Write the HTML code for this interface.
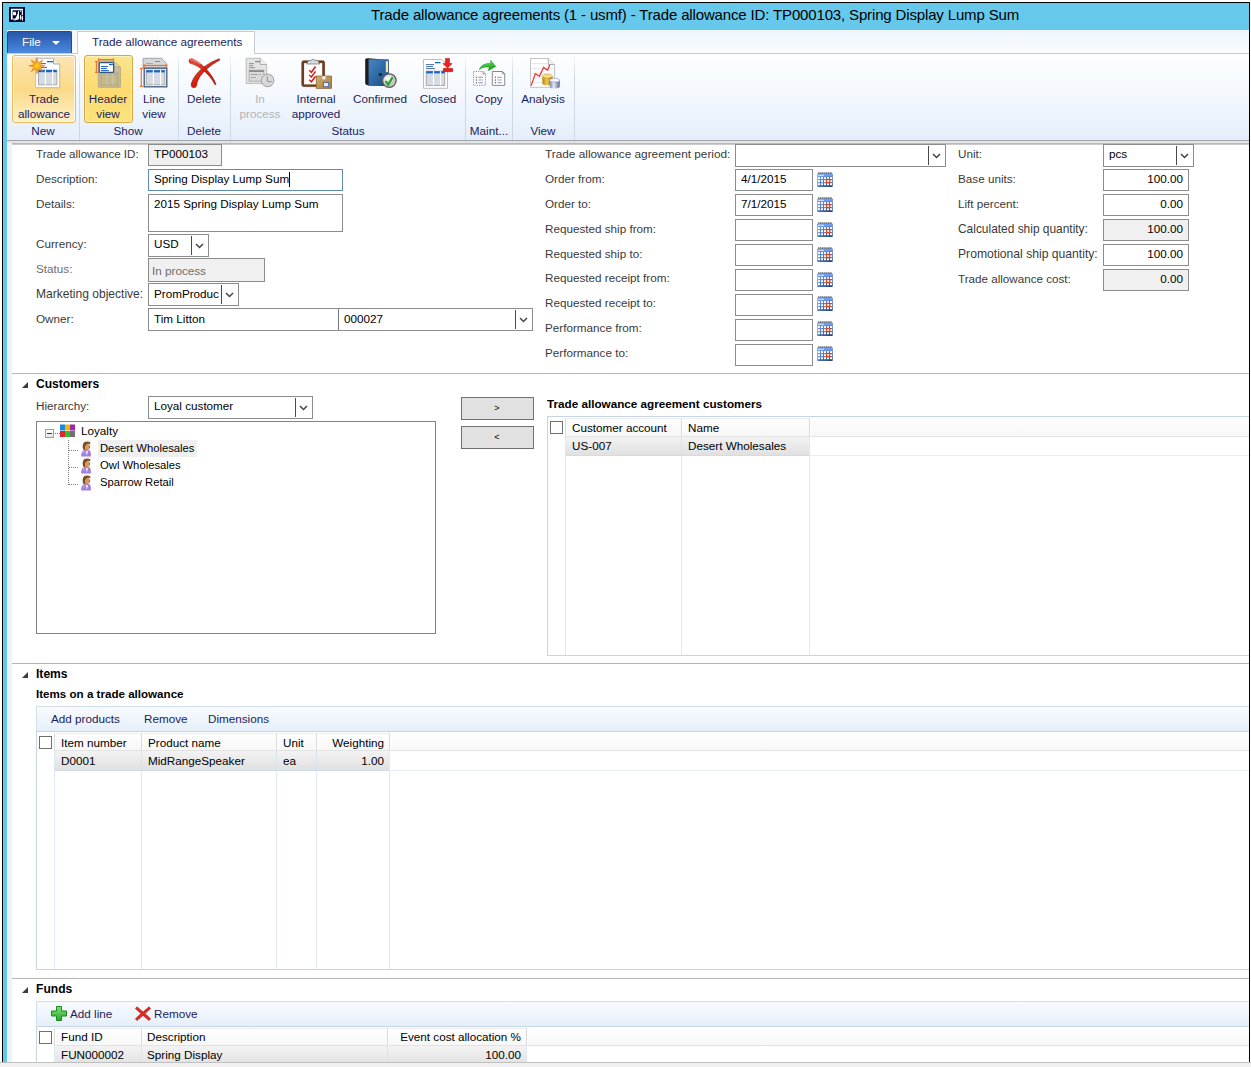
<!DOCTYPE html>
<html><head><meta charset="utf-8">
<style>
*{box-sizing:border-box}
html,body{margin:0;padding:0;width:1251px;height:1067px;overflow:hidden;background:#fff;position:relative;font-family:"Liberation Sans",sans-serif;font-size:11.7px;color:#000}
.a{position:absolute}
.t{position:absolute;white-space:nowrap;line-height:14px}
.lb{position:absolute;white-space:nowrap;line-height:14px;color:#3a3a3a}
</style></head><body>
<div class="a" style="left:2px;top:2px;width:1248px;height:1060px;border:1px solid #000;border-bottom:none;background:#fff"></div>
<div class="a" style="left:3px;top:3px;width:1246px;height:27px;background:#66c8ea"></div>
<div class="a" style="left:3px;top:30px;width:4px;height:1032px;background:#66c8ea"></div>
<div class="a" style="left:7px;top:141px;width:5px;height:921px;background:#eaf4fd"></div>
<div class="a" style="left:0px;top:1062px;width:1251px;height:1px;background:#c0c0c0"></div>
<div class="a" style="left:0px;top:1063px;width:1251px;height:4px;background:#f0f0f0"></div>
<svg class="a" style="left:9px;top:7px" width="16" height="15" viewBox="0 0 16 15"><rect width="16" height="15" fill="#000838"/><path d="M1.9,1.8 H13.9 V8.2 H12.8 V3.2 H3.6 V11.4 H5.8 V12.6 H1.9 Z" fill="#fff"/><rect x="4.1" y="4.8" width="2.8" height="3.4" fill="#fff"/><path d="M4.6,13.8 C7,11 8.6,8 9.3,3.8 L10,4 V12.3 C8.2,12.9 6.4,13.5 4.6,13.8 Z" fill="#fff"/><ellipse cx="11.6" cy="10.3" rx="0.75" ry="2.6" fill="#fff"/><ellipse cx="13.4" cy="11.3" rx="0.65" ry="2.5" fill="#fff"/><rect x="11.2" y="3.6" width="0.9" height="1.3" fill="#fff"/></svg>
<div class="t" style="left:371px;top:6px;font-size:15px;line-height:17px;letter-spacing:-0.15px;color:#000">Trade allowance agreements (1 - usmf) - Trade allowance ID: TP000103, Spring Display Lump Sum</div>
<div class="a" style="left:7px;top:30px;width:1242px;height:23px;background:linear-gradient(#eef5fd,#fbfdfe)"></div>
<div class="a" style="left:7px;top:53px;width:1242px;height:1px;background:#c9ccd2"></div>
<div class="a" style="left:7px;top:31px;width:65px;height:22px;background:linear-gradient(#2857a8,#3a70c6 50%,#4a8ade);border:1px solid #1f4a9a;border-bottom:none;border-radius:2px 2px 0 0"></div>
<div class="t" style="left:22px;top:35px;color:#fff;">File</div>
<div class="a" style="left:52px;top:41px;width:0;height:0;border-left:4px solid transparent;border-right:4px solid transparent;border-top:4px solid #fff"></div>
<div class="a" style="left:77px;top:31px;width:178px;height:23px;background:#fff;border:1px solid #c9ccd2;border-bottom:none"></div>
<div class="t" style="left:92px;top:35px;color:#1c1c5c;">Trade allowance agreements</div>
<div class="a" style="left:7px;top:54px;width:1242px;height:86px;background:linear-gradient(#fdfeff,#f5f9fe 40%,#e4eefa)"></div>
<div class="a" style="left:7px;top:140px;width:1242px;height:1px;background:#a0a5ad"></div>
<div class="a" style="left:7px;top:141px;width:1242px;height:2px;background:#e4e4e4"></div>
<div class="a" style="left:12px;top:143px;width:1237px;height:2px;background:linear-gradient(#b0b0b0,#d4d4d4)"></div>
<div class="a" style="left:12px;top:55px;width:64px;height:68px;border:1px solid #efb75e;border-radius:3px;box-shadow:inset 0 0 0 1px rgba(255,255,255,0.75);background:linear-gradient(#fde4b4,#fbd986 50%,#fdf1c8)"></div>
<div class="a" style="left:84px;top:55px;width:49px;height:68px;border:1px solid #d8a646;border-radius:3px;box-shadow:inset 0 0 0 1px rgba(255,250,220,0.5);background:linear-gradient(#fde58e,#fcdb70 50%,#fde27e)"></div>
<div class="a" style="left:79px;top:56px;width:1px;height:84px;background:linear-gradient(#f4f7fa,#cfd8e2 25%,#cfd8e2)"></div>
<div class="a" style="left:178px;top:56px;width:1px;height:84px;background:linear-gradient(#f4f7fa,#cfd8e2 25%,#cfd8e2)"></div>
<div class="a" style="left:230px;top:56px;width:1px;height:84px;background:linear-gradient(#f4f7fa,#cfd8e2 25%,#cfd8e2)"></div>
<div class="a" style="left:465px;top:56px;width:1px;height:84px;background:linear-gradient(#f4f7fa,#cfd8e2 25%,#cfd8e2)"></div>
<div class="a" style="left:512px;top:56px;width:1px;height:84px;background:linear-gradient(#f4f7fa,#cfd8e2 25%,#cfd8e2)"></div>
<div class="a" style="left:574px;top:56px;width:1px;height:84px;background:linear-gradient(#f4f7fa,#cfd8e2 25%,#cfd8e2)"></div>
<div class="t" style="left:-1.0px;top:92px;width:90px;text-align:center;color:#1c1c5c;">Trade</div>
<div class="t" style="left:-1.0px;top:107px;width:90px;text-align:center;color:#1c1c5c;">allowance</div>
<div class="t" style="left:63.0px;top:92px;width:90px;text-align:center;color:#1c1c5c;">Header</div>
<div class="t" style="left:63.0px;top:107px;width:90px;text-align:center;color:#1c1c5c;">view</div>
<div class="t" style="left:109.0px;top:92px;width:90px;text-align:center;color:#1c1c5c;">Line</div>
<div class="t" style="left:109.0px;top:107px;width:90px;text-align:center;color:#1c1c5c;">view</div>
<div class="t" style="left:159.0px;top:92px;width:90px;text-align:center;color:#1c1c5c;">Delete</div>
<div class="t" style="left:215.0px;top:92px;width:90px;text-align:center;color:#b4b4b4;">In</div>
<div class="t" style="left:215.0px;top:107px;width:90px;text-align:center;color:#b4b4b4;">process</div>
<div class="t" style="left:271.0px;top:92px;width:90px;text-align:center;color:#1c1c5c;">Internal</div>
<div class="t" style="left:271.0px;top:107px;width:90px;text-align:center;color:#1c1c5c;">approved</div>
<div class="t" style="left:335.0px;top:92px;width:90px;text-align:center;color:#1c1c5c;">Confirmed</div>
<div class="t" style="left:393.0px;top:92px;width:90px;text-align:center;color:#1c1c5c;">Closed</div>
<div class="t" style="left:444.0px;top:92px;width:90px;text-align:center;color:#1c1c5c;">Copy</div>
<div class="t" style="left:498.0px;top:92px;width:90px;text-align:center;color:#1c1c5c;">Analysis</div>
<div class="t" style="left:-2.0px;top:124px;width:90px;text-align:center;color:#1c1c5c;">New</div>
<div class="t" style="left:83.0px;top:124px;width:90px;text-align:center;color:#1c1c5c;">Show</div>
<div class="t" style="left:159.0px;top:124px;width:90px;text-align:center;color:#1c1c5c;">Delete</div>
<div class="t" style="left:303.0px;top:124px;width:90px;text-align:center;color:#1c1c5c;">Status</div>
<div class="t" style="left:444.0px;top:124px;width:90px;text-align:center;color:#1c1c5c;">Maint...</div>
<div class="t" style="left:498.0px;top:124px;width:90px;text-align:center;color:#1c1c5c;">View</div>
<svg class="a" style="left:24px;top:54px" width="40" height="38" viewBox="0 0 40 38"><defs><radialGradient id="sg"><stop offset="0" stop-color="#ffd80a"/><stop offset="0.45" stop-color="#f9a81a"/><stop offset="1" stop-color="#ec8210"/></radialGradient><linearGradient id="gold" x1="0" x2="1"><stop offset="0" stop-color="#c08a20"/><stop offset="0.45" stop-color="#f3c64a"/><stop offset="1" stop-color="#a06a10"/></linearGradient><linearGradient id="silv" x1="0" x2="1"><stop offset="0" stop-color="#8890b0"/><stop offset="0.4" stop-color="#e8eaf4"/><stop offset="1" stop-color="#6a7298"/></linearGradient><linearGradient id="book" x1="0" x2="1" y1="0" y2="1"><stop offset="0" stop-color="#5c9ad6"/><stop offset="1" stop-color="#1f5a98"/></linearGradient><radialGradient id="chk" cx="0.4" cy="0.35"><stop offset="0" stop-color="#ffffff"/><stop offset="1" stop-color="#c8c8c8"/></radialGradient><linearGradient id="box" x1="0" x2="1" y1="0" y2="1"><stop offset="0" stop-color="#d6b070"/><stop offset="1" stop-color="#a57a38"/></linearGradient><linearGradient id="grn" x1="0" x2="0" y1="0" y2="1"><stop offset="0" stop-color="#8ef27a"/><stop offset="1" stop-color="#1ea61e"/></linearGradient></defs><path d="M12.5,5.5 H30.5 L36.5,11 V34.5 H12.5 Z" fill="#b9a77a" opacity="0.35"/><path d="M11.5,4.5 H29.5 L35.5,10 V33.5 H11.5 Z" fill="#fff" stroke="#c4c4c4"/><path d="M29.5,4.5 V10 H35.5" fill="#eee" stroke="#a9a9a9"/><rect x="23" y="7" width="6" height="1.3" fill="#1a66c8"/><rect x="17" y="9" width="5" height="1.1" fill="#3a7ad0"/><rect x="17" y="13" width="6" height="1.1" fill="#3a7ad0"/><rect x="14.5" y="16" width="18.299999999999997" height="14.8" fill="#d5dae3" stroke="#a9a9a9" stroke-width="1"/><rect x="14.5" y="16" width="18.299999999999997" height="2.2" fill="#1766c6"/><rect x="20.799999999999997" y="16" width="1.2" height="14.8" fill="#fff"/><rect x="28.0" y="16" width="1.2" height="14.8" fill="#fff"/><polygon points="13.00,3.60 14.22,8.84 18.80,6.00 15.96,10.58 21.20,11.80 15.96,13.02 18.80,17.60 14.22,14.76 13.00,20.00 11.78,14.76 7.20,17.60 10.04,13.02 4.80,11.80 10.04,10.58 7.20,6.00 11.78,8.84" fill="url(#sg)" stroke="#d87410" stroke-width="0.5"/></svg>
<svg class="a" style="left:90px;top:54px" width="40" height="38" viewBox="0 0 40 38"><path d="M8.3,7 H24 L30.3,13 V33.2 H8.3 Z" fill="#c8bd98" stroke="#b3a884"/><path d="M24,7 V13 H30.3" fill="#d8cfae" stroke="#b3a884"/><rect x="11" y="19" width="17" height="12" fill="#c4b88e" stroke="#b0a47c"/><rect x="11" y="19" width="17" height="1.6" fill="#a9aea0"/><rect x="16.6" y="19" width="0.8" height="12" fill="#d2c8a2"/><rect x="22.4" y="19" width="0.8" height="12" fill="#d2c8a2"/><rect x="9.2" y="8.6" width="14.4" height="9.8" rx="1" fill="#fff" stroke="#34557e" stroke-width="1.3"/><rect x="19" y="10" width="3.8" height="1.2" fill="#1a66c8"/><rect x="11" y="12" width="6.8" height="1.1" fill="#2a6ac4"/><rect x="11" y="14" width="5.8" height="1.1" fill="#2a6ac4"/><rect x="11" y="16" width="7.8" height="1.1" fill="#2a6ac4"/><path d="M8.6,5.7 H23.4 M8.6,4.2 V7.4 M23.4,4.2 V7.4 M6.4,7.6 V18.4 M5,7.6 H8 M5,18.4 H8" stroke="#ee7530" stroke-width="1.2" fill="none"/></svg>
<svg class="a" style="left:136px;top:54px" width="40" height="38" viewBox="0 0 40 38"><path d="M7.1,4.3 H25.5 L30.6,9.5 V14 H7.1 Z" fill="#d4d8dc" stroke="#a2a6aa"/><rect x="19" y="7" width="5" height="1" fill="#6a8ec0"/><rect x="10" y="9" width="7" height="1" fill="#9aaac0"/><path d="M8,11.5 H30.5" stroke="#ee7530" stroke-width="1.3"/><circle cx="8.2" cy="11.5" r="1.3" fill="#ee7530"/><circle cx="30.3" cy="11.5" r="1.3" fill="#ee7530"/><path d="M5.3,14.3 V32.3 M3.9,14.3 H6.9 M3.9,32.3 H6.9" stroke="#ee7530" stroke-width="1.2" fill="none"/><rect x="8.2" y="14.2" width="22.6" height="18.6" fill="#fff" stroke="#40597a" stroke-width="1.3"/><rect x="10.2" y="16.2" width="18.6" height="14.600000000000001" fill="#d5dae3" stroke="#a9a9a9" stroke-width="1"/><rect x="10.2" y="16.2" width="18.6" height="2.2" fill="#1766c6"/><rect x="16.799999999999997" y="16.2" width="1.2" height="14.600000000000001" fill="#fff"/><rect x="24.0" y="16.2" width="1.2" height="14.600000000000001" fill="#fff"/></svg>
<svg class="a" style="left:184px;top:54px" width="40" height="38" viewBox="0 0 40 38"><defs><linearGradient id="xg4" x1="0" y1="0" x2="1" y2="1"><stop offset="0" stop-color="#f06050"/><stop offset="0.5" stop-color="#d8200e"/><stop offset="1" stop-color="#c01a0a"/></linearGradient></defs><path d="M35.28,4.67 L34.01,5.14 L32.69,5.67 L31.34,6.25 L29.96,6.89 L28.56,7.59 L27.15,8.34 L25.72,9.14 L24.30,9.99 L22.88,10.90 L21.48,11.85 L20.09,12.86 L18.73,13.92 L17.40,15.02 L16.11,16.18 L14.87,17.39 L13.68,18.65 L12.55,19.96 L11.49,21.33 L10.51,22.75 L9.61,24.22 L8.80,25.76 L8.10,27.35 L7.51,29.00 L7.07,30.59 L12.53,31.81 L12.76,30.38 L13.08,29.07 L13.49,27.76 L14.01,26.45 L14.62,25.15 L15.33,23.87 L16.12,22.60 L16.98,21.35 L17.93,20.12 L18.93,18.92 L20.00,17.75 L21.12,16.61 L22.28,15.50 L23.48,14.43 L24.71,13.40 L25.97,12.41 L27.23,11.46 L28.51,10.55 L29.78,9.69 L31.05,8.88 L32.31,8.12 L33.54,7.40 L34.75,6.74 L35.92,6.13 Z" fill="url(#xg4)" stroke="#6a1208" stroke-width="0.45"/><circle cx="9.8" cy="31.2" r="2.75" fill="#d41e10"/><path d="M6.24,9.38 L7.10,9.57 L7.97,9.82 L8.89,10.13 L9.87,10.52 L10.90,10.98 L11.96,11.50 L13.05,12.10 L14.17,12.75 L15.30,13.47 L16.45,14.25 L17.61,15.09 L18.76,15.99 L19.92,16.94 L21.06,17.95 L22.19,19.02 L23.31,20.13 L24.39,21.30 L25.45,22.51 L26.47,23.77 L27.46,25.08 L28.40,26.44 L29.29,27.84 L30.13,29.28 L30.91,30.77 L32.09,30.23 L31.43,28.63 L30.70,27.06 L29.91,25.53 L29.06,24.03 L28.17,22.58 L27.22,21.16 L26.23,19.79 L25.21,18.46 L24.16,17.18 L23.08,15.95 L21.98,14.77 L20.86,13.64 L19.73,12.56 L18.59,11.53 L17.45,10.57 L16.31,9.66 L15.18,8.80 L14.06,8.01 L12.95,7.28 L11.86,6.61 L10.78,6.01 L9.73,5.47 L8.70,5.00 L7.76,4.62 Z" fill="url(#xg4)" stroke="#6a1208" stroke-width="0.45"/><circle cx="7" cy="7" r="2.45" fill="#e43a2a"/><path d="M6.5,6 C9.5,5.6 13,7.5 16,9.6" stroke="#f8a090" stroke-width="1.3" fill="none" opacity="0.75"/></svg>
<svg class="a" style="left:240px;top:54px" width="40" height="38" viewBox="0 0 40 38"><path d="M6.2,4.3 H20.3 L26.7,10.5 V29.5 H6.2 Z" fill="#e3e3e3" stroke="#bcbcbc"/><path d="M20.3,4.3 V10.5 H26.7" fill="#f0f0f0" stroke="#b0b0b0"/><rect x="15" y="7" width="5" height="1.2" fill="#8a8a8a"/><rect x="9" y="9" width="5" height="1.1" fill="#9a9a9a"/><rect x="9" y="11" width="4" height="1.1" fill="#9a9a9a"/><rect x="9" y="13" width="6" height="1.1" fill="#9a9a9a"/><rect x="9.2" y="16.2" width="14.6" height="11" fill="#dadada" stroke="#b0b0b0"/><rect x="9.2" y="16.2" width="14.6" height="1.8" fill="#8a8a8a"/><rect x="11" y="20" width="7" height="1" fill="#a0a0a0"/><rect x="19" y="20" width="2" height="1" fill="#a0a0a0"/><rect x="11" y="23" width="5" height="1" fill="#a8a8a8"/><circle cx="27.6" cy="26.4" r="6.3" fill="#d9d9d9" stroke="#a0a0a0" stroke-width="1"/><path d="M27.4,22.3 V27.6 H31.6" stroke="#909090" stroke-width="1" fill="none"/></svg>
<svg class="a" style="left:296px;top:54px" width="40" height="38" viewBox="0 0 40 38"><defs><radialGradient id="b6sg"><stop offset="0" stop-color="#ffd80a"/><stop offset="0.45" stop-color="#f9a81a"/><stop offset="1" stop-color="#ec8210"/></radialGradient><linearGradient id="b6gold" x1="0" x2="1"><stop offset="0" stop-color="#c08a20"/><stop offset="0.45" stop-color="#f3c64a"/><stop offset="1" stop-color="#a06a10"/></linearGradient><linearGradient id="b6silv" x1="0" x2="1"><stop offset="0" stop-color="#8890b0"/><stop offset="0.4" stop-color="#e8eaf4"/><stop offset="1" stop-color="#6a7298"/></linearGradient><linearGradient id="b6book" x1="0" x2="1" y1="0" y2="1"><stop offset="0" stop-color="#5c9ad6"/><stop offset="1" stop-color="#1f5a98"/></linearGradient><radialGradient id="b6chk" cx="0.4" cy="0.35"><stop offset="0" stop-color="#ffffff"/><stop offset="1" stop-color="#c8c8c8"/></radialGradient><linearGradient id="b6box" x1="0" x2="1" y1="0" y2="1"><stop offset="0" stop-color="#d6b070"/><stop offset="1" stop-color="#a57a38"/></linearGradient><linearGradient id="b6grn" x1="0" x2="0" y1="0" y2="1"><stop offset="0" stop-color="#8ef27a"/><stop offset="1" stop-color="#1ea61e"/></linearGradient></defs><rect x="5.8" y="6.8" width="22.8" height="25.8" rx="1.8" fill="#6e401c" stroke="#4a2a10" stroke-width="0.6"/><rect x="8.1" y="9.1" width="18.1" height="21.3" fill="#fff"/><path d="M10.5,10 L12.5,6.5 H14.5 Q17.2,3.8 19.8,6.5 H21.8 L23.8,10 Z" fill="#d6d9de" stroke="#6d7075" stroke-width="0.7"/><path d="M13.2,16.3 L15.4,18.3 L19.6,12.5 M13.2,21 L15.4,23 L19.6,17.4 M13.2,25.8 L15.4,27.8 L19.6,22.2" stroke="#d41c1c" stroke-width="1.5" fill="none"/><rect x="20.2" y="22" width="15.4" height="12.4" fill="url(#b6box)" stroke="#7a5020" stroke-width="0.6"/><rect x="26.3" y="22" width="3.2" height="3.4" fill="#f0eee8"/><rect x="27.5" y="28.5" width="5.2" height="4.2" fill="#eaeaf0" stroke="#4a68a8" stroke-width="0.9"/></svg>
<svg class="a" style="left:360px;top:54px" width="40" height="38" viewBox="0 0 40 38"><defs><linearGradient id="bk7" x1="0" x2="1" y1="0" y2="1"><stop offset="0" stop-color="#4a86c6"/><stop offset="0.5" stop-color="#2e6aa6"/><stop offset="1" stop-color="#174a80"/></linearGradient><radialGradient id="ck7" cx="0.4" cy="0.35"><stop offset="0" stop-color="#fff"/><stop offset="1" stop-color="#c4c4c4"/></radialGradient></defs><path d="M5.2,5 Q6,4.2 8.5,4.3 L28.6,6 V18.5 L29,32 L8.5,31.5 Q5.4,31 5.2,29.5 Z" fill="#1c1c1c"/><rect x="8.6" y="5.3" width="20" height="26.4" fill="url(#bk7)"/><rect x="25.8" y="7.2" width="2.2" height="11" fill="#f3e6b8"/><circle cx="20.3" cy="20.5" r="1.6" fill="#2a1a10"/><circle cx="29.3" cy="26.6" r="6.8" fill="url(#ck7)" stroke="#5a5a5a" stroke-width="1.3"/><path d="M25.6,27.2 L28.2,30.6 L32.6,23.2" stroke="#1ea81e" stroke-width="2.2" fill="none"/></svg>
<svg class="a" style="left:418px;top:54px" width="40" height="38" viewBox="0 0 40 38"><path d="M5.5,5.5 H23.3 L29.5,11 V34.3 H5.5 Z" fill="#fff" stroke="#bdbdbd"/><rect x="17" y="8" width="5.5" height="1.3" fill="#1a66c8"/><rect x="8" y="10" width="8" height="1.1" fill="#5a7ab8"/><rect x="8" y="12" width="7" height="1.1" fill="#5a7ab8"/><rect x="8" y="14" width="9" height="1.1" fill="#5a7ab8"/><rect x="8.2" y="17.2" width="18.5" height="14.3" fill="#d5dae3" stroke="#a9a9a9" stroke-width="1"/><rect x="8.2" y="17.2" width="18.5" height="2.2" fill="#1766c6"/><rect x="14.9" y="17.2" width="1.2" height="14.3" fill="#fff"/><rect x="21.9" y="17.2" width="1.2" height="14.3" fill="#fff"/><path d="M27.4,4.5 H31.6 V9.6 H34.2 L29.5,14 L24.8,9.6 H27.4 Z" fill="#e82222" stroke="#b01010" stroke-width="0.5"/><rect x="25.2" y="14.3" width="9.6" height="3.4" rx="0.8" fill="#e22020" stroke="#a81010" stroke-width="0.5"/></svg>
<svg class="a" style="left:468px;top:54px" width="40" height="38" viewBox="0 0 40 38"><path d="M5.5,17.5 H15.5 L17.5,19.5 V31.3 H5.5 Z" fill="#fafafa" stroke="#8a8a8a" stroke-width="0.9" stroke-dasharray="1.2,1.1"/><path d="M15,17.5 V19.8 H17.5" fill="none" stroke="#8a8a8a" stroke-width="0.9"/><path d="M24.3,17.5 H34.5 L36.7,19.7 V31.4 H24.3 Z" fill="#fff" stroke="#8a8a8a" stroke-width="1"/><path d="M34.2,17.5 V19.8 H36.7" fill="none" stroke="#8a8a8a" stroke-width="0.9"/><path d="M8.4,22.5 V24 M8.4,25.3 V26.8 M8.4,28 V29.5 M27.4,22.5 V24 M27.4,25.3 V26.8 M27.4,28 V29.5" stroke="#555" stroke-width="0.9"/><path d="M10.4,23.3 H14.8 M10.4,26 H14.8 M10.4,28.7 H14.8 M29.3,23.3 H33.8 M29.3,26 H33.8 M29.3,28.7 H33.8" stroke="#a8a6c6" stroke-width="1.2"/><defs><linearGradient id="ag9" x1="0" y1="0" x2="0.3" y2="1"><stop offset="0" stop-color="#8cf47c"/><stop offset="0.6" stop-color="#3cc03a"/><stop offset="1" stop-color="#1a9a1a"/></linearGradient></defs><path d="M11.3,15.6 C13,11 17.5,9 22.7,9.6 L22.6,6.3 L27.8,12.4 L20.3,16.6 L21.4,13.2 C17,12.5 13.8,13.5 11.3,15.6 Z" fill="url(#ag9)" stroke="#1a8a1a" stroke-width="0.5"/></svg>
<svg class="a" style="left:525px;top:54px" width="40" height="38" viewBox="0 0 40 38"><defs><linearGradient id="g10" x1="0" x2="1"><stop offset="0" stop-color="#b88418"/><stop offset="0.45" stop-color="#f2c850"/><stop offset="1" stop-color="#9a6410"/></linearGradient><linearGradient id="s10" x1="0" x2="1"><stop offset="0" stop-color="#7a82a6"/><stop offset="0.4" stop-color="#e6e8f2"/><stop offset="1" stop-color="#5f678e"/></linearGradient></defs><path d="M5.5,4.5 H23.3 L29.6,10.5 V33.3 H5.5 Z" fill="#fff" stroke="#c2c2c2"/><path d="M23.3,4.5 V10.5 H29.6" fill="#f2f2f2" stroke="#b0b0b0"/><path d="M6.5,9.5 H23 M6.5,14.5 H28.5 M6.5,19.4 H28.5 M6.5,24 H28.5 M6.5,28.6 H28.5" stroke="#dfe7f0" stroke-width="0.9"/><path d="M6.2,31.6 L10.3,19.6 L14.4,22.3 L18.6,13.4 L22.6,16.3 L24.7,10.8" stroke="#f42a2a" stroke-width="1.2" fill="none"/><path d="M17.3,22.2 V29.4 A5.1,1.8 0 0 0 27.5,29.4 V22.2 Z" fill="url(#g10)"/><ellipse cx="22.4" cy="22.2" rx="5.1" ry="1.8" fill="#ffe27a" stroke="#b08020" stroke-width="0.5"/><path d="M24.7,26.2 V32.6 A5.05,1.9 0 0 0 34.8,32.6 V26.2 Z" fill="url(#s10)"/><ellipse cx="29.75" cy="26.2" rx="5.05" ry="1.9" fill="#f4f5fa" stroke="#7a82a6" stroke-width="0.5"/></svg>
<div class="lb" style="left:36px;top:147px;font-size:11.6px;">Trade allowance ID:</div>
<div class="lb" style="left:36px;top:172px;">Description:</div>
<div class="lb" style="left:36px;top:197px;">Details:</div>
<div class="lb" style="left:36px;top:237px;">Currency:</div>
<div class="lb" style="left:36px;top:262px;color:#6e6e6e;">Status:</div>
<div class="lb" style="left:36px;top:287px;font-size:12.05px;">Marketing objective:</div>
<div class="lb" style="left:36px;top:312px;">Owner:</div>
<div class="a" style="left:148px;top:144px;width:74px;height:22px;border:1px solid #8c8c8c;background:#f0f0f0"></div>
<div class="t" style="left:154px;top:147px;">TP000103</div>
<div class="a" style="left:148px;top:169px;width:195px;height:22px;border:1px solid #5f8ab4;background:#fff"></div>
<div class="t" style="left:154px;top:172px;">Spring Display Lump Sum</div>
<div class="a" style="left:289px;top:172px;width:1px;height:15px;background:#000"></div>
<div class="a" style="left:148px;top:194px;width:195px;height:38px;border:1px solid #8c8c8c;background:#fff"></div>
<div class="t" style="left:154px;top:197px;">2015 Spring Display Lump Sum</div>
<div class="a" style="left:148px;top:234px;width:61px;height:23px;border:1px solid #8c8c8c;background:#fff"></div>
<div class="a" style="left:191px;top:236px;width:1px;height:19px;background:#4a4a4a"></div>
<svg class="a" style="left:195px;top:243px" width="9" height="6" viewBox="0 0 9 6"><path d="M1 1 L4.5 4.5 L8 1" fill="none" stroke="#444" stroke-width="1.5"/></svg>
<div class="t" style="left:154px;top:237px;">USD</div>
<div class="a" style="left:148px;top:258px;width:117px;height:24px;border:1px solid #8c8c8c;background:#f0f0f0"></div>
<div class="t" style="left:152px;top:264px;color:#6d6d6d;">In process</div>
<div class="a" style="left:148px;top:283px;width:91px;height:23px;border:1px solid #8c8c8c;background:#fff"></div>
<div class="a" style="left:221px;top:285px;width:1px;height:19px;background:#4a4a4a"></div>
<svg class="a" style="left:225px;top:292px" width="9" height="6" viewBox="0 0 9 6"><path d="M1 1 L4.5 4.5 L8 1" fill="none" stroke="#444" stroke-width="1.5"/></svg>
<div class="t" style="left:154px;top:287px;">PromProduc</div>
<div class="a" style="left:148px;top:308px;width:385px;height:23px;border:1px solid #8c8c8c;background:#fff"></div>
<div class="a" style="left:515px;top:310px;width:1px;height:19px;background:#4a4a4a"></div>
<svg class="a" style="left:519px;top:317px" width="9" height="6" viewBox="0 0 9 6"><path d="M1 1 L4.5 4.5 L8 1" fill="none" stroke="#444" stroke-width="1.5"/></svg>
<div class="a" style="left:338px;top:309px;width:1px;height:21px;background:#7a7a7a"></div>
<div class="t" style="left:154px;top:312px;">Tim Litton</div>
<div class="t" style="left:344px;top:312px;">000027</div>
<div class="lb" style="left:545px;top:147px;font-size:11.82px;">Trade allowance agreement period:</div>
<div class="lb" style="left:545px;top:172px;">Order from:</div>
<div class="lb" style="left:545px;top:197px;">Order to:</div>
<div class="lb" style="left:545px;top:222px;">Requested ship from:</div>
<div class="lb" style="left:545px;top:247px;">Requested ship to:</div>
<div class="lb" style="left:545px;top:271px;">Requested receipt from:</div>
<div class="lb" style="left:545px;top:296px;">Requested receipt to:</div>
<div class="lb" style="left:545px;top:321px;">Performance from:</div>
<div class="lb" style="left:545px;top:346px;">Performance to:</div>
<div class="a" style="left:735px;top:144px;width:211px;height:23px;border:1px solid #8c8c8c;background:#fff"></div>
<div class="a" style="left:928px;top:146px;width:1px;height:19px;background:#4a4a4a"></div>
<svg class="a" style="left:932px;top:153px" width="9" height="6" viewBox="0 0 9 6"><path d="M1 1 L4.5 4.5 L8 1" fill="none" stroke="#444" stroke-width="1.5"/></svg>
<div class="a" style="left:735px;top:169px;width:78px;height:22px;border:1px solid #8c8c8c;background:#fff"></div>
<div class="t" style="left:741px;top:172px;">4/1/2015</div>
<svg class="a" style="left:817px;top:172px" width="16" height="15" viewBox="0 0 16 15"><defs><linearGradient id="cg" x1="0" y1="0" x2="1" y2="1"><stop offset="0" stop-color="#7ea6ea"/><stop offset="0.55" stop-color="#4a72b8"/><stop offset="1" stop-color="#22406c"/></linearGradient></defs><rect x="0.3" y="1.6" width="15.4" height="13.3" rx="0.6" fill="url(#cg)"/><rect x="0.6" y="1.8" width="14.8" height="2.7" fill="#6d9cf0"/><rect x="1" y="2.8" width="6" height="1" fill="#dfeaff"/><rect x="1.0" y="5.1" width="2" height="2" fill="#fff"/><rect x="4.0" y="5.1" width="2" height="2" fill="#fff"/><rect x="7.0" y="5.1" width="2" height="2" fill="#fff"/><rect x="10.0" y="5.1" width="2" height="2" fill="#fff"/><rect x="13.0" y="5.1" width="2" height="2" fill="#fff"/><rect x="1.0" y="8.2" width="2" height="2" fill="#fff"/><rect x="4.0" y="8.2" width="2" height="2" fill="#fff"/><rect x="7.0" y="8.2" width="2" height="2" fill="#fff"/><rect x="10.0" y="8.2" width="2" height="2" fill="#fff"/><rect x="13.0" y="8.2" width="2" height="2" fill="#fff"/><rect x="1.0" y="11.2" width="2" height="2" fill="#fff"/><rect x="4.0" y="11.2" width="2" height="2" fill="#fff"/><rect x="7.0" y="11.2" width="2" height="2" fill="#fff"/><rect x="10.0" y="11.2" width="2" height="2" fill="#fff"/><rect x="13.0" y="11.2" width="2" height="2" fill="#fff"/><circle cx="1.9" cy="0.9" r="0.75" fill="#3a3a3a"/><circle cx="3.9" cy="0.9" r="0.75" fill="#3a3a3a"/><circle cx="5.9" cy="0.9" r="0.75" fill="#3a3a3a"/><circle cx="7.9" cy="0.9" r="0.75" fill="#3a3a3a"/><circle cx="9.9" cy="0.9" r="0.75" fill="#3a3a3a"/><circle cx="11.9" cy="0.9" r="0.75" fill="#3a3a3a"/><circle cx="13.9" cy="0.9" r="0.75" fill="#3a3a3a"/><rect x="9.6" y="7.4" width="3.2" height="3.2" fill="#eef8ff" stroke="#e8400e" stroke-width="1.3" rx="0.4"/></svg>
<div class="a" style="left:735px;top:194px;width:78px;height:22px;border:1px solid #8c8c8c;background:#fff"></div>
<div class="t" style="left:741px;top:197px;">7/1/2015</div>
<svg class="a" style="left:817px;top:197px" width="16" height="15" viewBox="0 0 16 15"><defs><linearGradient id="cg" x1="0" y1="0" x2="1" y2="1"><stop offset="0" stop-color="#7ea6ea"/><stop offset="0.55" stop-color="#4a72b8"/><stop offset="1" stop-color="#22406c"/></linearGradient></defs><rect x="0.3" y="1.6" width="15.4" height="13.3" rx="0.6" fill="url(#cg)"/><rect x="0.6" y="1.8" width="14.8" height="2.7" fill="#6d9cf0"/><rect x="1" y="2.8" width="6" height="1" fill="#dfeaff"/><rect x="1.0" y="5.1" width="2" height="2" fill="#fff"/><rect x="4.0" y="5.1" width="2" height="2" fill="#fff"/><rect x="7.0" y="5.1" width="2" height="2" fill="#fff"/><rect x="10.0" y="5.1" width="2" height="2" fill="#fff"/><rect x="13.0" y="5.1" width="2" height="2" fill="#fff"/><rect x="1.0" y="8.2" width="2" height="2" fill="#fff"/><rect x="4.0" y="8.2" width="2" height="2" fill="#fff"/><rect x="7.0" y="8.2" width="2" height="2" fill="#fff"/><rect x="10.0" y="8.2" width="2" height="2" fill="#fff"/><rect x="13.0" y="8.2" width="2" height="2" fill="#fff"/><rect x="1.0" y="11.2" width="2" height="2" fill="#fff"/><rect x="4.0" y="11.2" width="2" height="2" fill="#fff"/><rect x="7.0" y="11.2" width="2" height="2" fill="#fff"/><rect x="10.0" y="11.2" width="2" height="2" fill="#fff"/><rect x="13.0" y="11.2" width="2" height="2" fill="#fff"/><circle cx="1.9" cy="0.9" r="0.75" fill="#3a3a3a"/><circle cx="3.9" cy="0.9" r="0.75" fill="#3a3a3a"/><circle cx="5.9" cy="0.9" r="0.75" fill="#3a3a3a"/><circle cx="7.9" cy="0.9" r="0.75" fill="#3a3a3a"/><circle cx="9.9" cy="0.9" r="0.75" fill="#3a3a3a"/><circle cx="11.9" cy="0.9" r="0.75" fill="#3a3a3a"/><circle cx="13.9" cy="0.9" r="0.75" fill="#3a3a3a"/><rect x="9.6" y="7.4" width="3.2" height="3.2" fill="#eef8ff" stroke="#e8400e" stroke-width="1.3" rx="0.4"/></svg>
<div class="a" style="left:735px;top:219px;width:78px;height:22px;border:1px solid #8c8c8c;background:#fff"></div>
<svg class="a" style="left:817px;top:222px" width="16" height="15" viewBox="0 0 16 15"><defs><linearGradient id="cg" x1="0" y1="0" x2="1" y2="1"><stop offset="0" stop-color="#7ea6ea"/><stop offset="0.55" stop-color="#4a72b8"/><stop offset="1" stop-color="#22406c"/></linearGradient></defs><rect x="0.3" y="1.6" width="15.4" height="13.3" rx="0.6" fill="url(#cg)"/><rect x="0.6" y="1.8" width="14.8" height="2.7" fill="#6d9cf0"/><rect x="1" y="2.8" width="6" height="1" fill="#dfeaff"/><rect x="1.0" y="5.1" width="2" height="2" fill="#fff"/><rect x="4.0" y="5.1" width="2" height="2" fill="#fff"/><rect x="7.0" y="5.1" width="2" height="2" fill="#fff"/><rect x="10.0" y="5.1" width="2" height="2" fill="#fff"/><rect x="13.0" y="5.1" width="2" height="2" fill="#fff"/><rect x="1.0" y="8.2" width="2" height="2" fill="#fff"/><rect x="4.0" y="8.2" width="2" height="2" fill="#fff"/><rect x="7.0" y="8.2" width="2" height="2" fill="#fff"/><rect x="10.0" y="8.2" width="2" height="2" fill="#fff"/><rect x="13.0" y="8.2" width="2" height="2" fill="#fff"/><rect x="1.0" y="11.2" width="2" height="2" fill="#fff"/><rect x="4.0" y="11.2" width="2" height="2" fill="#fff"/><rect x="7.0" y="11.2" width="2" height="2" fill="#fff"/><rect x="10.0" y="11.2" width="2" height="2" fill="#fff"/><rect x="13.0" y="11.2" width="2" height="2" fill="#fff"/><circle cx="1.9" cy="0.9" r="0.75" fill="#3a3a3a"/><circle cx="3.9" cy="0.9" r="0.75" fill="#3a3a3a"/><circle cx="5.9" cy="0.9" r="0.75" fill="#3a3a3a"/><circle cx="7.9" cy="0.9" r="0.75" fill="#3a3a3a"/><circle cx="9.9" cy="0.9" r="0.75" fill="#3a3a3a"/><circle cx="11.9" cy="0.9" r="0.75" fill="#3a3a3a"/><circle cx="13.9" cy="0.9" r="0.75" fill="#3a3a3a"/><rect x="9.6" y="7.4" width="3.2" height="3.2" fill="#eef8ff" stroke="#e8400e" stroke-width="1.3" rx="0.4"/></svg>
<div class="a" style="left:735px;top:244px;width:78px;height:22px;border:1px solid #8c8c8c;background:#fff"></div>
<svg class="a" style="left:817px;top:247px" width="16" height="15" viewBox="0 0 16 15"><defs><linearGradient id="cg" x1="0" y1="0" x2="1" y2="1"><stop offset="0" stop-color="#7ea6ea"/><stop offset="0.55" stop-color="#4a72b8"/><stop offset="1" stop-color="#22406c"/></linearGradient></defs><rect x="0.3" y="1.6" width="15.4" height="13.3" rx="0.6" fill="url(#cg)"/><rect x="0.6" y="1.8" width="14.8" height="2.7" fill="#6d9cf0"/><rect x="1" y="2.8" width="6" height="1" fill="#dfeaff"/><rect x="1.0" y="5.1" width="2" height="2" fill="#fff"/><rect x="4.0" y="5.1" width="2" height="2" fill="#fff"/><rect x="7.0" y="5.1" width="2" height="2" fill="#fff"/><rect x="10.0" y="5.1" width="2" height="2" fill="#fff"/><rect x="13.0" y="5.1" width="2" height="2" fill="#fff"/><rect x="1.0" y="8.2" width="2" height="2" fill="#fff"/><rect x="4.0" y="8.2" width="2" height="2" fill="#fff"/><rect x="7.0" y="8.2" width="2" height="2" fill="#fff"/><rect x="10.0" y="8.2" width="2" height="2" fill="#fff"/><rect x="13.0" y="8.2" width="2" height="2" fill="#fff"/><rect x="1.0" y="11.2" width="2" height="2" fill="#fff"/><rect x="4.0" y="11.2" width="2" height="2" fill="#fff"/><rect x="7.0" y="11.2" width="2" height="2" fill="#fff"/><rect x="10.0" y="11.2" width="2" height="2" fill="#fff"/><rect x="13.0" y="11.2" width="2" height="2" fill="#fff"/><circle cx="1.9" cy="0.9" r="0.75" fill="#3a3a3a"/><circle cx="3.9" cy="0.9" r="0.75" fill="#3a3a3a"/><circle cx="5.9" cy="0.9" r="0.75" fill="#3a3a3a"/><circle cx="7.9" cy="0.9" r="0.75" fill="#3a3a3a"/><circle cx="9.9" cy="0.9" r="0.75" fill="#3a3a3a"/><circle cx="11.9" cy="0.9" r="0.75" fill="#3a3a3a"/><circle cx="13.9" cy="0.9" r="0.75" fill="#3a3a3a"/><rect x="9.6" y="7.4" width="3.2" height="3.2" fill="#eef8ff" stroke="#e8400e" stroke-width="1.3" rx="0.4"/></svg>
<div class="a" style="left:735px;top:269px;width:78px;height:22px;border:1px solid #8c8c8c;background:#fff"></div>
<svg class="a" style="left:817px;top:272px" width="16" height="15" viewBox="0 0 16 15"><defs><linearGradient id="cg" x1="0" y1="0" x2="1" y2="1"><stop offset="0" stop-color="#7ea6ea"/><stop offset="0.55" stop-color="#4a72b8"/><stop offset="1" stop-color="#22406c"/></linearGradient></defs><rect x="0.3" y="1.6" width="15.4" height="13.3" rx="0.6" fill="url(#cg)"/><rect x="0.6" y="1.8" width="14.8" height="2.7" fill="#6d9cf0"/><rect x="1" y="2.8" width="6" height="1" fill="#dfeaff"/><rect x="1.0" y="5.1" width="2" height="2" fill="#fff"/><rect x="4.0" y="5.1" width="2" height="2" fill="#fff"/><rect x="7.0" y="5.1" width="2" height="2" fill="#fff"/><rect x="10.0" y="5.1" width="2" height="2" fill="#fff"/><rect x="13.0" y="5.1" width="2" height="2" fill="#fff"/><rect x="1.0" y="8.2" width="2" height="2" fill="#fff"/><rect x="4.0" y="8.2" width="2" height="2" fill="#fff"/><rect x="7.0" y="8.2" width="2" height="2" fill="#fff"/><rect x="10.0" y="8.2" width="2" height="2" fill="#fff"/><rect x="13.0" y="8.2" width="2" height="2" fill="#fff"/><rect x="1.0" y="11.2" width="2" height="2" fill="#fff"/><rect x="4.0" y="11.2" width="2" height="2" fill="#fff"/><rect x="7.0" y="11.2" width="2" height="2" fill="#fff"/><rect x="10.0" y="11.2" width="2" height="2" fill="#fff"/><rect x="13.0" y="11.2" width="2" height="2" fill="#fff"/><circle cx="1.9" cy="0.9" r="0.75" fill="#3a3a3a"/><circle cx="3.9" cy="0.9" r="0.75" fill="#3a3a3a"/><circle cx="5.9" cy="0.9" r="0.75" fill="#3a3a3a"/><circle cx="7.9" cy="0.9" r="0.75" fill="#3a3a3a"/><circle cx="9.9" cy="0.9" r="0.75" fill="#3a3a3a"/><circle cx="11.9" cy="0.9" r="0.75" fill="#3a3a3a"/><circle cx="13.9" cy="0.9" r="0.75" fill="#3a3a3a"/><rect x="9.6" y="7.4" width="3.2" height="3.2" fill="#eef8ff" stroke="#e8400e" stroke-width="1.3" rx="0.4"/></svg>
<div class="a" style="left:735px;top:294px;width:78px;height:22px;border:1px solid #8c8c8c;background:#fff"></div>
<svg class="a" style="left:817px;top:296px" width="16" height="15" viewBox="0 0 16 15"><defs><linearGradient id="cg" x1="0" y1="0" x2="1" y2="1"><stop offset="0" stop-color="#7ea6ea"/><stop offset="0.55" stop-color="#4a72b8"/><stop offset="1" stop-color="#22406c"/></linearGradient></defs><rect x="0.3" y="1.6" width="15.4" height="13.3" rx="0.6" fill="url(#cg)"/><rect x="0.6" y="1.8" width="14.8" height="2.7" fill="#6d9cf0"/><rect x="1" y="2.8" width="6" height="1" fill="#dfeaff"/><rect x="1.0" y="5.1" width="2" height="2" fill="#fff"/><rect x="4.0" y="5.1" width="2" height="2" fill="#fff"/><rect x="7.0" y="5.1" width="2" height="2" fill="#fff"/><rect x="10.0" y="5.1" width="2" height="2" fill="#fff"/><rect x="13.0" y="5.1" width="2" height="2" fill="#fff"/><rect x="1.0" y="8.2" width="2" height="2" fill="#fff"/><rect x="4.0" y="8.2" width="2" height="2" fill="#fff"/><rect x="7.0" y="8.2" width="2" height="2" fill="#fff"/><rect x="10.0" y="8.2" width="2" height="2" fill="#fff"/><rect x="13.0" y="8.2" width="2" height="2" fill="#fff"/><rect x="1.0" y="11.2" width="2" height="2" fill="#fff"/><rect x="4.0" y="11.2" width="2" height="2" fill="#fff"/><rect x="7.0" y="11.2" width="2" height="2" fill="#fff"/><rect x="10.0" y="11.2" width="2" height="2" fill="#fff"/><rect x="13.0" y="11.2" width="2" height="2" fill="#fff"/><circle cx="1.9" cy="0.9" r="0.75" fill="#3a3a3a"/><circle cx="3.9" cy="0.9" r="0.75" fill="#3a3a3a"/><circle cx="5.9" cy="0.9" r="0.75" fill="#3a3a3a"/><circle cx="7.9" cy="0.9" r="0.75" fill="#3a3a3a"/><circle cx="9.9" cy="0.9" r="0.75" fill="#3a3a3a"/><circle cx="11.9" cy="0.9" r="0.75" fill="#3a3a3a"/><circle cx="13.9" cy="0.9" r="0.75" fill="#3a3a3a"/><rect x="9.6" y="7.4" width="3.2" height="3.2" fill="#eef8ff" stroke="#e8400e" stroke-width="1.3" rx="0.4"/></svg>
<div class="a" style="left:735px;top:319px;width:78px;height:22px;border:1px solid #8c8c8c;background:#fff"></div>
<svg class="a" style="left:817px;top:321px" width="16" height="15" viewBox="0 0 16 15"><defs><linearGradient id="cg" x1="0" y1="0" x2="1" y2="1"><stop offset="0" stop-color="#7ea6ea"/><stop offset="0.55" stop-color="#4a72b8"/><stop offset="1" stop-color="#22406c"/></linearGradient></defs><rect x="0.3" y="1.6" width="15.4" height="13.3" rx="0.6" fill="url(#cg)"/><rect x="0.6" y="1.8" width="14.8" height="2.7" fill="#6d9cf0"/><rect x="1" y="2.8" width="6" height="1" fill="#dfeaff"/><rect x="1.0" y="5.1" width="2" height="2" fill="#fff"/><rect x="4.0" y="5.1" width="2" height="2" fill="#fff"/><rect x="7.0" y="5.1" width="2" height="2" fill="#fff"/><rect x="10.0" y="5.1" width="2" height="2" fill="#fff"/><rect x="13.0" y="5.1" width="2" height="2" fill="#fff"/><rect x="1.0" y="8.2" width="2" height="2" fill="#fff"/><rect x="4.0" y="8.2" width="2" height="2" fill="#fff"/><rect x="7.0" y="8.2" width="2" height="2" fill="#fff"/><rect x="10.0" y="8.2" width="2" height="2" fill="#fff"/><rect x="13.0" y="8.2" width="2" height="2" fill="#fff"/><rect x="1.0" y="11.2" width="2" height="2" fill="#fff"/><rect x="4.0" y="11.2" width="2" height="2" fill="#fff"/><rect x="7.0" y="11.2" width="2" height="2" fill="#fff"/><rect x="10.0" y="11.2" width="2" height="2" fill="#fff"/><rect x="13.0" y="11.2" width="2" height="2" fill="#fff"/><circle cx="1.9" cy="0.9" r="0.75" fill="#3a3a3a"/><circle cx="3.9" cy="0.9" r="0.75" fill="#3a3a3a"/><circle cx="5.9" cy="0.9" r="0.75" fill="#3a3a3a"/><circle cx="7.9" cy="0.9" r="0.75" fill="#3a3a3a"/><circle cx="9.9" cy="0.9" r="0.75" fill="#3a3a3a"/><circle cx="11.9" cy="0.9" r="0.75" fill="#3a3a3a"/><circle cx="13.9" cy="0.9" r="0.75" fill="#3a3a3a"/><rect x="9.6" y="7.4" width="3.2" height="3.2" fill="#eef8ff" stroke="#e8400e" stroke-width="1.3" rx="0.4"/></svg>
<div class="a" style="left:735px;top:344px;width:78px;height:22px;border:1px solid #8c8c8c;background:#fff"></div>
<svg class="a" style="left:817px;top:346px" width="16" height="15" viewBox="0 0 16 15"><defs><linearGradient id="cg" x1="0" y1="0" x2="1" y2="1"><stop offset="0" stop-color="#7ea6ea"/><stop offset="0.55" stop-color="#4a72b8"/><stop offset="1" stop-color="#22406c"/></linearGradient></defs><rect x="0.3" y="1.6" width="15.4" height="13.3" rx="0.6" fill="url(#cg)"/><rect x="0.6" y="1.8" width="14.8" height="2.7" fill="#6d9cf0"/><rect x="1" y="2.8" width="6" height="1" fill="#dfeaff"/><rect x="1.0" y="5.1" width="2" height="2" fill="#fff"/><rect x="4.0" y="5.1" width="2" height="2" fill="#fff"/><rect x="7.0" y="5.1" width="2" height="2" fill="#fff"/><rect x="10.0" y="5.1" width="2" height="2" fill="#fff"/><rect x="13.0" y="5.1" width="2" height="2" fill="#fff"/><rect x="1.0" y="8.2" width="2" height="2" fill="#fff"/><rect x="4.0" y="8.2" width="2" height="2" fill="#fff"/><rect x="7.0" y="8.2" width="2" height="2" fill="#fff"/><rect x="10.0" y="8.2" width="2" height="2" fill="#fff"/><rect x="13.0" y="8.2" width="2" height="2" fill="#fff"/><rect x="1.0" y="11.2" width="2" height="2" fill="#fff"/><rect x="4.0" y="11.2" width="2" height="2" fill="#fff"/><rect x="7.0" y="11.2" width="2" height="2" fill="#fff"/><rect x="10.0" y="11.2" width="2" height="2" fill="#fff"/><rect x="13.0" y="11.2" width="2" height="2" fill="#fff"/><circle cx="1.9" cy="0.9" r="0.75" fill="#3a3a3a"/><circle cx="3.9" cy="0.9" r="0.75" fill="#3a3a3a"/><circle cx="5.9" cy="0.9" r="0.75" fill="#3a3a3a"/><circle cx="7.9" cy="0.9" r="0.75" fill="#3a3a3a"/><circle cx="9.9" cy="0.9" r="0.75" fill="#3a3a3a"/><circle cx="11.9" cy="0.9" r="0.75" fill="#3a3a3a"/><circle cx="13.9" cy="0.9" r="0.75" fill="#3a3a3a"/><rect x="9.6" y="7.4" width="3.2" height="3.2" fill="#eef8ff" stroke="#e8400e" stroke-width="1.3" rx="0.4"/></svg>
<div class="lb" style="left:958px;top:147px;">Unit:</div>
<div class="lb" style="left:958px;top:172px;">Base units:</div>
<div class="lb" style="left:958px;top:197px;">Lift percent:</div>
<div class="lb" style="left:958px;top:222px;font-size:11.93px;">Calculated ship quantity:</div>
<div class="lb" style="left:958px;top:247px;font-size:12.15px;">Promotional ship quantity:</div>
<div class="lb" style="left:958px;top:272px;font-size:11.65px;">Trade allowance cost:</div>
<div class="a" style="left:1103px;top:144px;width:91px;height:23px;border:1px solid #8c8c8c;background:#fff"></div>
<div class="a" style="left:1176px;top:146px;width:1px;height:19px;background:#4a4a4a"></div>
<svg class="a" style="left:1180px;top:153px" width="9" height="6" viewBox="0 0 9 6"><path d="M1 1 L4.5 4.5 L8 1" fill="none" stroke="#444" stroke-width="1.5"/></svg>
<div class="t" style="left:1109px;top:147px;">pcs</div>
<div class="a" style="left:1103px;top:169px;width:86px;height:22px;border:1px solid #8c8c8c;background:#fff"></div>
<div class="t" style="right:68px;top:172px;text-align:right;">100.00</div>
<div class="a" style="left:1103px;top:194px;width:86px;height:22px;border:1px solid #8c8c8c;background:#fff"></div>
<div class="t" style="right:68px;top:197px;text-align:right;">0.00</div>
<div class="a" style="left:1103px;top:219px;width:86px;height:22px;border:1px solid #8c8c8c;background:#f0f0f0"></div>
<div class="t" style="right:68px;top:222px;text-align:right;">100.00</div>
<div class="a" style="left:1103px;top:244px;width:86px;height:22px;border:1px solid #8c8c8c;background:#fff"></div>
<div class="t" style="right:68px;top:247px;text-align:right;">100.00</div>
<div class="a" style="left:1103px;top:269px;width:86px;height:22px;border:1px solid #8c8c8c;background:#f0f0f0"></div>
<div class="t" style="right:68px;top:272px;text-align:right;">0.00</div>
<div class="a" style="left:12px;top:373px;width:1237px;height:1px;background:#b4b4b4"></div>
<svg class="a" style="left:22px;top:382px" width="7" height="6" viewBox="0 0 7 6"><path d="M6 0 L6 6 L0 6 Z" fill="#3c3c3c"/></svg>
<div class="t" style="left:36px;top:377px;font-size:12.1px;font-weight:bold;">Customers</div>
<div class="lb" style="left:36px;top:399px;">Hierarchy:</div>
<div class="a" style="left:148px;top:396px;width:165px;height:23px;border:1px solid #8c8c8c;background:#fff"></div>
<div class="a" style="left:295px;top:398px;width:1px;height:19px;background:#4a4a4a"></div>
<svg class="a" style="left:299px;top:405px" width="9" height="6" viewBox="0 0 9 6"><path d="M1 1 L4.5 4.5 L8 1" fill="none" stroke="#444" stroke-width="1.5"/></svg>
<div class="t" style="left:154px;top:399px;">Loyal customer</div>
<div class="a" style="left:36px;top:421px;width:400px;height:213px;border:1px solid #828282;background:#fff"></div>
<div class="a" style="left:45px;top:429px;width:9px;height:9px;border:1px solid #a0a0a0;background:linear-gradient(#fff,#e6e6e6)"></div>
<div class="a" style="left:47px;top:433px;width:5px;height:1px;background:#333"></div>
<svg class="a" style="left:54px;top:432px" width="30" height="58" viewBox="0 0 30 58"><path d="M1,1.5 H6 M14.5,8 V53 M15,18.5 H25 M15,35.5 H25 M15,52.5 H25" stroke="#808080" stroke-width="1" stroke-dasharray="1,1" fill="none"/></svg>
<svg class="a" style="left:60px;top:424px" width="16" height="14" viewBox="0 0 16 14"><rect x="0" y="0.5" width="5" height="6" fill="#1a8ae0"/><rect x="5" y="0.5" width="5" height="6" fill="#f5b800"/><rect x="10" y="0.5" width="5" height="6" fill="#9a2aa8"/><rect x="0" y="7" width="5" height="6" fill="#e0282a"/><rect x="5" y="7" width="5" height="6" fill="#30c030"/><rect x="10" y="7" width="5" height="6" fill="#707070"/></svg>
<svg class="a" style="left:80px;top:441px" width="12" height="16" viewBox="0 0 12 16"><path d="M1.2,15.6 Q0.9,10.4 4,9 L9.2,9 Q11.2,10.4 10.9,15.6 Z" fill="#a47ede"/><path d="M2,11.5 Q3,9.8 4.5,9.6 L5,13 Z" fill="#c0a0f4" opacity="0.8"/><path d="M5.6,9.2 L6.9,14.8 L8.3,9.2 Z" fill="#e6f2ee"/><ellipse cx="6.9" cy="5.9" rx="2.7" ry="3.3" fill="#d89a62"/><path d="M6,8.8 L7,10.5 L8,8.8 Z" fill="#b06a2a"/><path d="M3.2,8.6 Q1.6,3.4 4.4,1 Q7.8,-0.2 10.4,1.4 L10.2,3.6 Q9.4,2.6 7.8,2.8 Q5.6,3.2 5,5.6 Q4.8,7.6 5.6,9.2 Z" fill="#7a4e22"/><path d="M9.4,4 Q10.6,5.5 9.8,7.6 L9.3,7 Z" fill="#6a4018"/></svg>
<svg class="a" style="left:80px;top:458px" width="12" height="16" viewBox="0 0 12 16"><path d="M1.2,15.6 Q0.9,10.4 4,9 L9.2,9 Q11.2,10.4 10.9,15.6 Z" fill="#a47ede"/><path d="M2,11.5 Q3,9.8 4.5,9.6 L5,13 Z" fill="#c0a0f4" opacity="0.8"/><path d="M5.6,9.2 L6.9,14.8 L8.3,9.2 Z" fill="#e6f2ee"/><ellipse cx="6.9" cy="5.9" rx="2.7" ry="3.3" fill="#d89a62"/><path d="M6,8.8 L7,10.5 L8,8.8 Z" fill="#b06a2a"/><path d="M3.2,8.6 Q1.6,3.4 4.4,1 Q7.8,-0.2 10.4,1.4 L10.2,3.6 Q9.4,2.6 7.8,2.8 Q5.6,3.2 5,5.6 Q4.8,7.6 5.6,9.2 Z" fill="#7a4e22"/><path d="M9.4,4 Q10.6,5.5 9.8,7.6 L9.3,7 Z" fill="#6a4018"/></svg>
<svg class="a" style="left:80px;top:475px" width="12" height="16" viewBox="0 0 12 16"><path d="M1.2,15.6 Q0.9,10.4 4,9 L9.2,9 Q11.2,10.4 10.9,15.6 Z" fill="#a47ede"/><path d="M2,11.5 Q3,9.8 4.5,9.6 L5,13 Z" fill="#c0a0f4" opacity="0.8"/><path d="M5.6,9.2 L6.9,14.8 L8.3,9.2 Z" fill="#e6f2ee"/><ellipse cx="6.9" cy="5.9" rx="2.7" ry="3.3" fill="#d89a62"/><path d="M6,8.8 L7,10.5 L8,8.8 Z" fill="#b06a2a"/><path d="M3.2,8.6 Q1.6,3.4 4.4,1 Q7.8,-0.2 10.4,1.4 L10.2,3.6 Q9.4,2.6 7.8,2.8 Q5.6,3.2 5,5.6 Q4.8,7.6 5.6,9.2 Z" fill="#7a4e22"/><path d="M9.4,4 Q10.6,5.5 9.8,7.6 L9.3,7 Z" fill="#6a4018"/></svg>
<div class="t" style="left:81px;top:424px;">Loyalty</div>
<div class="a" style="left:98px;top:440px;width:99px;height:17px;background:#efefef"></div>
<div class="t" style="left:100px;top:441px;font-size:11.25px;">Desert Wholesales</div>
<div class="t" style="left:100px;top:458px;font-size:11.25px;">Owl Wholesales</div>
<div class="t" style="left:100px;top:475px;font-size:11.25px;">Sparrow Retail</div>
<div class="a" style="left:461px;top:397px;width:73px;height:23px;border:1px solid #707070;background:#e1e1e1"></div>
<div class="a" style="left:461px;top:426px;width:73px;height:23px;border:1px solid #707070;background:#e1e1e1"></div>
<div class="t" style="left:487.0px;top:401px;width:20px;text-align:center;font-size:9px;">&gt;</div>
<div class="t" style="left:487.0px;top:430px;width:20px;text-align:center;font-size:9px;">&lt;</div>
<div class="t" style="left:547px;top:397px;font-weight:bold;">Trade allowance agreement customers</div>
<div class="a" style="left:547px;top:416px;width:703px;height:240px;border:1px solid #c5d5e6;background:#fff"></div>
<div class="a" style="left:550px;top:421px;width:13px;height:13px;border:1px solid #6e6e6e;background:#fff"></div>
<div class="a" style="left:565px;top:418px;width:245px;height:19px;background:linear-gradient(#fefefe,#f7f7f7);border-top:1px solid #ececec"></div>
<div class="a" style="left:810px;top:418px;width:439px;height:19px;background:linear-gradient(#fefefe,#f7f7f7)"></div>
<div class="a" style="left:565px;top:436px;width:684px;height:1px;background:#e3e3e3"></div>
<div class="a" style="left:565px;top:418px;width:1px;height:18px;background:#dadada"></div>
<div class="a" style="left:566px;top:418px;width:1px;height:18px;background:#fff"></div>
<div class="a" style="left:681px;top:418px;width:1px;height:18px;background:#dadada"></div>
<div class="a" style="left:682px;top:418px;width:1px;height:18px;background:#fff"></div>
<div class="a" style="left:809px;top:418px;width:1px;height:18px;background:#dadada"></div>
<div class="a" style="left:810px;top:418px;width:1px;height:18px;background:#fff"></div>
<div class="a" style="left:565px;top:437px;width:1px;height:218px;background:#dfe9f5"></div>
<div class="a" style="left:681px;top:437px;width:1px;height:218px;background:#dfe9f5"></div>
<div class="a" style="left:809px;top:437px;width:1px;height:218px;background:#dfe9f5"></div>
<div class="a" style="left:566px;top:437px;width:243px;height:19px;background:linear-gradient(#f3f3f3,#e0e0e0);border-bottom:1px solid #cfdcea"></div>
<div class="a" style="left:810px;top:455px;width:439px;height:1px;background:#e6eef7"></div>
<div class="a" style="left:681px;top:437px;width:1px;height:18px;background:#d8e4f2"></div>
<div class="t" style="left:572px;top:421px;">Customer account</div>
<div class="t" style="left:688px;top:421px;">Name</div>
<div class="t" style="left:572px;top:439px;">US-007</div>
<div class="t" style="left:688px;top:439px;">Desert Wholesales</div>
<div class="a" style="left:12px;top:663px;width:1237px;height:1px;background:#b4b4b4"></div>
<svg class="a" style="left:22px;top:672px" width="7" height="6" viewBox="0 0 7 6"><path d="M6 0 L6 6 L0 6 Z" fill="#3c3c3c"/></svg>
<div class="t" style="left:36px;top:667px;font-size:12.1px;font-weight:bold;">Items</div>
<div class="t" style="left:36px;top:687px;font-size:11.6px;font-weight:bold;">Items on a trade allowance</div>
<div class="a" style="left:36px;top:706px;width:1213px;height:26px;background:linear-gradient(#f8fbfe,#e5effa);border:1px solid #d0deec;border-right:none"></div>
<div class="t" style="left:51px;top:712px;color:#1c1c5c;">Add products</div>
<div class="t" style="left:144px;top:712px;color:#1c1c5c;">Remove</div>
<div class="t" style="left:208px;top:712px;color:#1c1c5c;">Dimensions</div>
<div class="a" style="left:36px;top:731px;width:1214px;height:239px;border:1px solid #c5d5e6;background:#fff"></div>
<div class="a" style="left:39px;top:736px;width:13px;height:13px;border:1px solid #6e6e6e;background:#fff"></div>
<div class="a" style="left:54px;top:733px;width:336px;height:18px;background:linear-gradient(#fefefe,#f7f7f7);border-top:1px solid #ececec"></div>
<div class="a" style="left:390px;top:733px;width:859px;height:18px;background:linear-gradient(#fefefe,#f7f7f7)"></div>
<div class="a" style="left:54px;top:750px;width:1195px;height:1px;background:#e3e3e3"></div>
<div class="a" style="left:54px;top:733px;width:1px;height:17px;background:#dadada"></div>
<div class="a" style="left:55px;top:733px;width:1px;height:17px;background:#fff"></div>
<div class="a" style="left:141px;top:733px;width:1px;height:17px;background:#dadada"></div>
<div class="a" style="left:142px;top:733px;width:1px;height:17px;background:#fff"></div>
<div class="a" style="left:276px;top:733px;width:1px;height:17px;background:#dadada"></div>
<div class="a" style="left:277px;top:733px;width:1px;height:17px;background:#fff"></div>
<div class="a" style="left:316px;top:733px;width:1px;height:17px;background:#dadada"></div>
<div class="a" style="left:317px;top:733px;width:1px;height:17px;background:#fff"></div>
<div class="a" style="left:389px;top:733px;width:1px;height:17px;background:#dadada"></div>
<div class="a" style="left:390px;top:733px;width:1px;height:17px;background:#fff"></div>
<div class="a" style="left:54px;top:751px;width:1px;height:218px;background:#dfe9f5"></div>
<div class="a" style="left:141px;top:751px;width:1px;height:218px;background:#dfe9f5"></div>
<div class="a" style="left:276px;top:751px;width:1px;height:218px;background:#dfe9f5"></div>
<div class="a" style="left:316px;top:751px;width:1px;height:218px;background:#dfe9f5"></div>
<div class="a" style="left:389px;top:751px;width:1px;height:218px;background:#dfe9f5"></div>
<div class="a" style="left:55px;top:751px;width:334px;height:20px;background:linear-gradient(#f3f3f3,#e0e0e0);border-bottom:1px solid #cfdcea"></div>
<div class="a" style="left:390px;top:770px;width:859px;height:1px;background:#e6eef7"></div>
<div class="a" style="left:141px;top:751px;width:1px;height:19px;background:#d8e4f2"></div>
<div class="a" style="left:276px;top:751px;width:1px;height:19px;background:#d8e4f2"></div>
<div class="a" style="left:316px;top:751px;width:1px;height:19px;background:#d8e4f2"></div>
<div class="t" style="left:61px;top:736px;">Item number</div>
<div class="t" style="left:148px;top:736px;">Product name</div>
<div class="t" style="left:283px;top:736px;">Unit</div>
<div class="t" style="right:867px;top:736px;text-align:right;">Weighting</div>
<div class="t" style="left:61px;top:754px;">D0001</div>
<div class="t" style="left:148px;top:754px;">MidRangeSpeaker</div>
<div class="t" style="left:283px;top:754px;">ea</div>
<div class="t" style="right:867px;top:754px;text-align:right;">1.00</div>
<div class="a" style="left:12px;top:978px;width:1237px;height:1px;background:#b4b4b4"></div>
<svg class="a" style="left:22px;top:987px" width="7" height="6" viewBox="0 0 7 6"><path d="M6 0 L6 6 L0 6 Z" fill="#3c3c3c"/></svg>
<div class="t" style="left:36px;top:982px;font-size:12.1px;font-weight:bold;">Funds</div>
<div class="a" style="left:36px;top:1001px;width:1213px;height:26px;background:linear-gradient(#f8fbfe,#e5effa);border:1px solid #d0deec;border-right:none"></div>
<div class="t" style="left:70px;top:1007px;color:#1c1c5c;">Add line</div>
<div class="t" style="left:154px;top:1007px;color:#1c1c5c;">Remove</div>
<svg class="a" style="left:51px;top:1006px" width="16" height="15" viewBox="0 0 16 15"><defs><linearGradient id="pg" x1="0" x2="0" y1="0" y2="1"><stop offset="0" stop-color="#7ee27a"/><stop offset="1" stop-color="#2aa82a"/></linearGradient></defs><path d="M5.5,0.5 H10.5 V5 H15.5 V10 H10.5 V14.5 H5.5 V10 H0.5 V5 H5.5 Z" fill="url(#pg)" stroke="#1a8a1a" stroke-width="1"/></svg><svg class="a" style="left:135px;top:1006px" width="16" height="15" viewBox="0 0 16 15"><path d="M2,0.8 L8,6 L14,0.8 L15.6,2.6 L10,7.6 L15.6,12.8 L14,14.6 L8,9.4 L2,14.6 L0.4,12.8 L6,7.6 L0.4,2.6 Z" fill="#e42a20" stroke="#9a1a12" stroke-width="0.6"/></svg>
<div class="a" style="left:36px;top:1026px;width:1214px;height:50px;border:1px solid #c5d5e6;background:#fff"></div>
<div class="a" style="left:39px;top:1031px;width:13px;height:13px;border:1px solid #6e6e6e;background:#fff"></div>
<div class="a" style="left:54px;top:1028px;width:473px;height:18px;background:linear-gradient(#fefefe,#f7f7f7);border-top:1px solid #ececec"></div>
<div class="a" style="left:527px;top:1028px;width:722px;height:18px;background:linear-gradient(#fefefe,#f7f7f7)"></div>
<div class="a" style="left:54px;top:1045px;width:1195px;height:1px;background:#e3e3e3"></div>
<div class="a" style="left:54px;top:1028px;width:1px;height:17px;background:#dadada"></div>
<div class="a" style="left:55px;top:1028px;width:1px;height:17px;background:#fff"></div>
<div class="a" style="left:141px;top:1028px;width:1px;height:17px;background:#dadada"></div>
<div class="a" style="left:142px;top:1028px;width:1px;height:17px;background:#fff"></div>
<div class="a" style="left:387px;top:1028px;width:1px;height:17px;background:#dadada"></div>
<div class="a" style="left:388px;top:1028px;width:1px;height:17px;background:#fff"></div>
<div class="a" style="left:526px;top:1028px;width:1px;height:17px;background:#dadada"></div>
<div class="a" style="left:527px;top:1028px;width:1px;height:17px;background:#fff"></div>
<div class="a" style="left:54px;top:1046px;width:1px;height:29px;background:#dfe9f5"></div>
<div class="a" style="left:141px;top:1046px;width:1px;height:29px;background:#dfe9f5"></div>
<div class="a" style="left:387px;top:1046px;width:1px;height:29px;background:#dfe9f5"></div>
<div class="a" style="left:526px;top:1046px;width:1px;height:29px;background:#dfe9f5"></div>
<div class="a" style="left:55px;top:1046px;width:471px;height:20px;background:linear-gradient(#f3f3f3,#e0e0e0)"></div>
<div class="a" style="left:141px;top:1046px;width:1px;height:20px;background:#d8e4f2"></div>
<div class="a" style="left:387px;top:1046px;width:1px;height:20px;background:#d8e4f2"></div>
<div class="t" style="left:61px;top:1030px;">Fund ID</div>
<div class="t" style="left:147px;top:1030px;">Description</div>
<div class="t" style="right:730px;top:1030px;text-align:right;">Event cost allocation %</div>
<div class="t" style="left:61px;top:1048px;">FUN000002</div>
<div class="t" style="left:147px;top:1048px;">Spring Display</div>
<div class="t" style="right:730px;top:1048px;text-align:right;">100.00</div>
<div class="a" style="left:1249px;top:2px;width:1px;height:1060px;background:#000"></div>
<div class="a" style="left:1250px;top:0px;width:1px;height:1062px;background:#fff"></div>
<div class="a" style="left:0px;top:1062px;width:1251px;height:1px;background:#c0c0c0"></div>
<div class="a" style="left:0px;top:1063px;width:1251px;height:4px;background:#f0f0f0"></div>
</body></html>
